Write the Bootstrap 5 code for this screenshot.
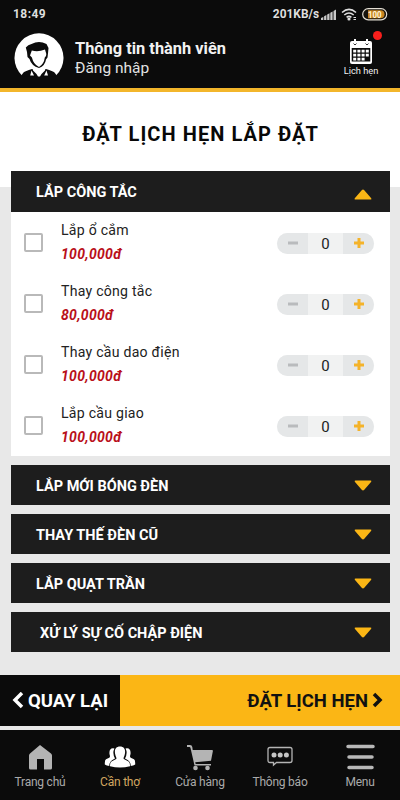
<!DOCTYPE html>
<html lang="vi">
<head>
<meta charset="utf-8">
<meta name="viewport" content="width=device-width, initial-scale=1">
<title>Đặt lịch hẹn lắp đặt</title>
<link href="https://cdn.jsdelivr.net/npm/bootstrap@5.3.0/dist/css/bootstrap.min.css" rel="stylesheet">
<style>
:root{--ink:#0b0b0b;--bar:#1d1d1d;--gold:#fbb615;--page:#e8e8e8}
body{font-family:Roboto,"Noto Sans",sans-serif;background:var(--page);height:800px;overflow:hidden;color:#111}
svg{display:block;flex:none}
.app{height:800px}
.top-area{background:var(--ink);height:92px;border-bottom:4px solid #f3b62b;color:#f2f2f2}
.status{height:29px;padding:0 12px 0 13px;font-size:12px;font-weight:700;line-height:29px;color:#dedede}
.clock{letter-spacing:.45px}
.speed{font-size:11.9px;margin-right:2px}
.member{padding:4px 21px 0 14px}
.member-text{padding:6px 0 0 11px}
.member-name{font-size:16.4px;font-weight:700;line-height:19px}
.member-login{font-size:15.5px;line-height:20px;color:#e2e2e2}
.appt{width:36px;font-size:9.3px;line-height:10px;padding-top:6px}
.appt svg{margin-bottom:1px}
.alert-dot{width:9px;height:9px;background:#f81f1c;top:-2px;right:-3px}
.title-band{background:#fff;height:95px;padding-top:28px}
.page-title{font-size:20px;font-weight:700;line-height:28px;letter-spacing:1.06px;color:#080808;text-indent:1px}
.services{margin:-16px 10px 0 11px;gap:9px}
.svc-bar{background:var(--bar);color:#fff;height:40px;font-size:14.5px;font-weight:700;padding:1px 18px 0 25px}
.svc-bar span{padding-top:2px}
.svc-open{height:41px}
.svc-body{background:#fff;height:244px}
.svc-row{height:61.1px;padding:6px 16px 0 13px}
.tick.form-check-input{width:19px;height:19px;border:2px solid #b9b9b9;border-radius:2px;margin:15px 0 0;background-color:#fff}
.svc-text{margin-left:18px}
.svc-name{font-size:14.1px;line-height:24px;letter-spacing:.25px;color:#222}
.svc-price{font-size:14px;font-weight:700;font-style:italic;line-height:25px;letter-spacing:.3px;color:#b9101a}
.stepper{width:97px;height:21px;border-radius:11px;overflow:hidden;background:#f1f2f2;margin-top:15px}
.stepper .step{width:31px;background:#e5e7e8;border:0;padding:0 0 1px}
.stepper .qty{font-size:15px;line-height:22px;color:#222}
.actions{margin-top:23px;height:51px;font-size:18.5px;font-weight:700;line-height:51px}
.actions span{padding-top:2px}
.back{background:var(--ink);color:#fff;width:120px;padding-left:12px}
.book{background:var(--gold);color:#111;padding-right:17px}
.tabs{margin-top:4px;height:71px;background:var(--ink)}
.tab{font-size:12px;letter-spacing:-.22px;line-height:18px;color:#aaa;padding-top:11px;width:80px}
.tab svg{height:32px}
.tab-on{color:#d2a661}
</style>
<script src="https://cdn.jsdelivr.net/npm/bootstrap@5.3.0/dist/js/bootstrap.bundle.min.js"></script>
</head>
<body>
<svg width="0" height="0" class="position-absolute" aria-hidden="true">
<symbol id="down" viewBox="0 0 18 11"><path d="M1.500.5h15q1.600.2.5 1.400L10.300 9.700Q9 11.300 7.700 9.700L1 1.900Q0 .7 1.500.5Z" fill="#fbb615"/></symbol>
<symbol id="minus" viewBox="0 0 10 10"><path d="M0 3.500h10v3H0z" fill="#b9bbbd"/></symbol>
<symbol id="plus" viewBox="0 0 10 10"><path d="M3.500 0h3v3.500H10v3H6.500V10h-3V6.500H0v-3h3.500z" fill="#f4b32a"/></symbol>
</svg>
<div class="app d-flex flex-column">
<header class="top-area flex-shrink-0">
  <div class="status d-flex align-items-center">
    <span class="clock me-auto">18:49</span>
    <span class="speed">201KB/s</span>
    <svg width="16" height="11" viewBox="0 0 16 11" fill="#c8c8c8"><path d="M0 9 2.300 8V11H0zM3.100 7.300l2.300-1.200V11H3.100zM6.200 5.600l2.300-1.300V11H6.200zM9.300 3.800l2.300-1.300V11H9.300zM12.500 2 15 .4V11h-2.500z"/></svg>
    <svg class="ms-1" width="17" height="13" viewBox="0 0 17 13" fill="none" stroke="#dedede" stroke-width="1.600"><path d="M1 4.500Q8 -1.600 15 4.500M3.300 7Q8 3 12.700 7M5.600 9.300Q8 7.300 10.400 9.300"/><circle cx="8" cy="11" r=".8" fill="#dedede"/><path d="M12.500 9.500h2.500m-2.500 2h2.500" stroke-width="1"/></svg>
    <svg class="ms-1" width="26" height="13" viewBox="0 0 26 13"><rect x=".7" y=".7" width="24" height="11.200" rx="5.600" fill="#17130d" stroke="#e4dfd4" stroke-width="1.200"/><path d="M6 2.300h12.500a4 4 0 0 1 0 8H6z" fill="#c78520"/><text x="12.700" y="9.700" text-anchor="middle" font-size="9.500" font-weight="700" fill="#fff4d8" textLength="13.500" lengthAdjust="spacingAndGlyphs">100</text></svg>
  </div>
  <div class="member d-flex align-items-start">
    <svg width="50" height="44" viewBox="0 0 50 44"><path d="M8 42.500A24.500 24.500 0 1 1 42 42.500Z" fill="#fff"/><path d="M6.500 43.500 9.500 39.500Q11 38 18 36L25 40 32 36Q39 38 40.500 39.500L43.500 43.500Z" fill="#0b0b0b"/><path d="M15.500 26 13.500 24 13 19 11.800 14.500Q14 11.500 17.500 11 25 7 32.500 11L34.500 15 34 20.500 33.500 24.500 32 26.500Q31 33 25 35 17.500 33 15.500 26Z" fill="#0b0b0b"/><path d="M17.800 17.500Q24 19.500 31 16.500L32.300 21Q32.300 24 30.800 24.500 30 31 25 34 19.500 31.500 17.900 24.500L16 22.500Z" fill="#fff"/><path d="M19 33.500 25 37.800 31 33.500 31 37.500 27.500 41 26 43.500H24L22.500 41 19 37.500Z" fill="#fff"/><path d="m17.500 37.500 2.500 5h-3.800zM32.500 37.500l1.500 5h-3.800z" fill="#fff"/></svg>
    <div class="member-text flex-grow-1">
      <div class="member-name">Thông tin thành viên</div>
      <div class="member-login">Đăng nhập</div>
    </div>
    <div class="appt d-flex flex-column align-items-center text-nowrap position-relative">
      <svg width="24" height="26" viewBox="0 0 24 26"><path d="M3 2h18q2 0 2 2v19q0 2-2 2H3q-2 0-2-2V4q0-2 2-2Z" fill="#fff"/><path d="M2.700 9h18.600v13.500H2.700z" fill="#0b0b0b"/><g fill="#fff"><path d="M5 0h2v4H5zM17 0h2v4h-2z"/><path d="M4.200 10.700h3v2.800h-3zM8.400 10.700h3v2.800h-3zM12.600 10.700h3v2.800h-3zM16.800 10.700h3v2.800h-3zM4.200 14.700h3v2.800h-3zM8.400 14.700h3v2.800h-3zM12.600 14.700h3v2.800h-3zM16.800 14.700h3v2.800h-3zM4.200 18.700h3v2.800h-3zM8.400 18.700h3v2.800h-3zM12.600 18.700h3v2.800h-3z"/></g><path d="M4.500 4.500q1.500 3 3 0M16.500 4.500q1.500 3 3 0" fill="none" stroke="#333"/></svg>
      <span>Lịch hẹn</span>
      <span class="alert-dot position-absolute rounded-circle"></span>
    </div>
  </div>
</header>
<section class="title-band flex-shrink-0"><h1 class="page-title text-center m-0">ĐẶT LỊCH HẸN LẮP ĐẶT</h1></section>
<main class="services d-flex flex-column">
  <section>
    <div class="svc-bar svc-open d-flex align-items-center justify-content-between"><span>LẮP CÔNG TẮC</span><svg width="18" height="11" class="mt-1"><use href="#down" transform="rotate(180 9 5.5)"/></svg></div>
    <div class="svc-body">
      <div class="svc-row d-flex align-items-start"><input class="tick form-check-input" type="checkbox" aria-label="Lắp ổ cắm"><div class="flex-grow-1 svc-text"><div class="svc-name">Lắp ổ cắm</div><div class="svc-price">100,000đ</div></div><div class="stepper d-flex"><button class="step d-flex align-items-center justify-content-center" aria-label="Giảm"><svg width="10" height="10"><use href="#minus"/></svg></button><span class="qty flex-fill text-center">0</span><button class="step d-flex align-items-center justify-content-center" aria-label="Tăng"><svg width="10" height="10"><use href="#plus"/></svg></button></div></div>
      <div class="svc-row d-flex align-items-start"><input class="tick form-check-input" type="checkbox" aria-label="Thay công tắc"><div class="flex-grow-1 svc-text"><div class="svc-name">Thay công tắc</div><div class="svc-price">80,000đ</div></div><div class="stepper d-flex"><button class="step d-flex align-items-center justify-content-center" aria-label="Giảm"><svg width="10" height="10"><use href="#minus"/></svg></button><span class="qty flex-fill text-center">0</span><button class="step d-flex align-items-center justify-content-center" aria-label="Tăng"><svg width="10" height="10"><use href="#plus"/></svg></button></div></div>
      <div class="svc-row d-flex align-items-start"><input class="tick form-check-input" type="checkbox" aria-label="Thay cầu dao điện"><div class="flex-grow-1 svc-text"><div class="svc-name">Thay cầu dao điện</div><div class="svc-price">100,000đ</div></div><div class="stepper d-flex"><button class="step d-flex align-items-center justify-content-center" aria-label="Giảm"><svg width="10" height="10"><use href="#minus"/></svg></button><span class="qty flex-fill text-center">0</span><button class="step d-flex align-items-center justify-content-center" aria-label="Tăng"><svg width="10" height="10"><use href="#plus"/></svg></button></div></div>
      <div class="svc-row d-flex align-items-start"><input class="tick form-check-input" type="checkbox" aria-label="Lắp cầu giao"><div class="flex-grow-1 svc-text"><div class="svc-name">Lắp cầu giao</div><div class="svc-price">100,000đ</div></div><div class="stepper d-flex"><button class="step d-flex align-items-center justify-content-center" aria-label="Giảm"><svg width="10" height="10"><use href="#minus"/></svg></button><span class="qty flex-fill text-center">0</span><button class="step d-flex align-items-center justify-content-center" aria-label="Tăng"><svg width="10" height="10"><use href="#plus"/></svg></button></div></div>
    </div>
  </section>
  <div class="svc-bar d-flex align-items-center justify-content-between"><span>LẮP MỚI BÓNG ĐÈN</span><svg width="18" height="11"><use href="#down"/></svg></div>
  <div class="svc-bar d-flex align-items-center justify-content-between"><span>THAY THẾ ĐÈN CŨ</span><svg width="18" height="11"><use href="#down"/></svg></div>
  <div class="svc-bar d-flex align-items-center justify-content-between"><span>LẮP QUẠT TRẦN</span><svg width="18" height="11"><use href="#down"/></svg></div>
  <div class="svc-bar d-flex align-items-center justify-content-between"><span class="ms-1">XỬ LÝ SỰ CỐ CHẬP ĐIỆN</span><svg width="18" height="11"><use href="#down"/></svg></div>
</main>
<div class="actions d-flex flex-shrink-0 text-nowrap">
  <div class="back d-flex align-items-center"><svg width="12" height="18" viewBox="0 0 12 18" class="me-1"><path d="M10 1 3 8l7 7" fill="none" stroke="#fff" stroke-width="3.500"/></svg><span>QUAY LẠI</span></div>
  <div class="book d-flex align-items-center justify-content-end flex-grow-1"><span>ĐẶT LỊCH HẸN</span><svg width="11" height="18" viewBox="0 0 11 18" class="ms-1"><path d="m2 2 6 6-6 6" fill="none" stroke="#111" stroke-width="3.500"/></svg></div>
</div>
<nav class="tabs d-flex flex-shrink-0">
  <div class="tab d-flex flex-column align-items-center"><svg width="26" viewBox="0 0 26 32"><path d="M13 4 24 12.500q1 1 1 2V27q0 1.500-1.500 1.500H17V18H10v10.500H3.500Q2 28.500 2 27V14.500q0-1 1-2Z" fill="#b4b4b4"/></svg><span>Trang chủ</span></div>
  <div class="tab tab-on d-flex flex-column align-items-center"><svg width="32" viewBox="0 0 32 32" fill="#fff"><path d="M10 7.500c-3.300-.8-5.200 1.700-4.400 6 .5 1.700.6 2.500-.3 3.300L2 18.300Q.8 19 .8 22v1.500q1.800 1.300 4.700 1.600 0-4.600 2.500-5.900l3-1.700q-3-5.500-.5-10ZM22 7.500c3.300-.8 5.200 1.700 4.400 6-.5 1.700-.6 2.500.3 3.300l3.300 1.500q1.200.7 1.200 3.700v1.500q-1.800 1.300-4.700 1.600 0-4.600-2.500-5.900l-3-1.700q3-5.500.5-10Z"/><path d="M16 5.500c4.500 0 5.800 3.500 4.800 7.700-.6 2.800-1.700 3.400-1 4.800l4.700 2.500q1.500 1 1.500 4v.7Q16 28 6 25.200v-.7q0-3 1.500-4l4.700-2.500c.7-1.400-.4-2-1-4.800-1-4.200.3-7.700 4.800-7.700Z" stroke="#0b0b0b" stroke-width="1" paint-order="stroke"/></svg><span>Cần thợ</span></div>
  <div class="tab d-flex flex-column align-items-center"><svg width="28" viewBox="0 0 28 32" fill="#b4b4b4"><path d="M1 4h3q2 .2 2.300 2L6.700 9H26q1 0 .9 1L25 19.800l-15.800 1.400.5 1.800H25v1.500H8.500L4.500 7q-.3-1-1-1H1z"/><circle cx="9.500" cy="27" r="2.300"/><circle cx="21.500" cy="27" r="2.300"/></svg><span>Cửa hàng</span></div>
  <div class="tab d-flex flex-column align-items-center"><svg width="26" viewBox="0 0 26 32"><path d="M3 6.500h20q2 0 2 2v11q0 2-2 2H9.500L6.500 24v-2.500H3q-2 0-2-2v-11q0-2 2-2Z" fill="none" stroke="#b4b4b4" stroke-width="1.300"/><g fill="#c4c4c4"><circle cx="7" cy="14" r="2.500"/><circle cx="13.200" cy="14" r="2.500"/><circle cx="19.400" cy="14" r="2.500"/></g></svg><span>Thông báo</span></div>
  <div class="tab d-flex flex-column align-items-center"><svg width="30" viewBox="0 0 30 32"><path d="M3 5.500h25M4 16h23M4 26.500h23" stroke="#b8b8b8" stroke-width="3.500" stroke-linecap="round"/></svg><span>Menu</span></div>
</nav>
</div>
</body>
</html>
